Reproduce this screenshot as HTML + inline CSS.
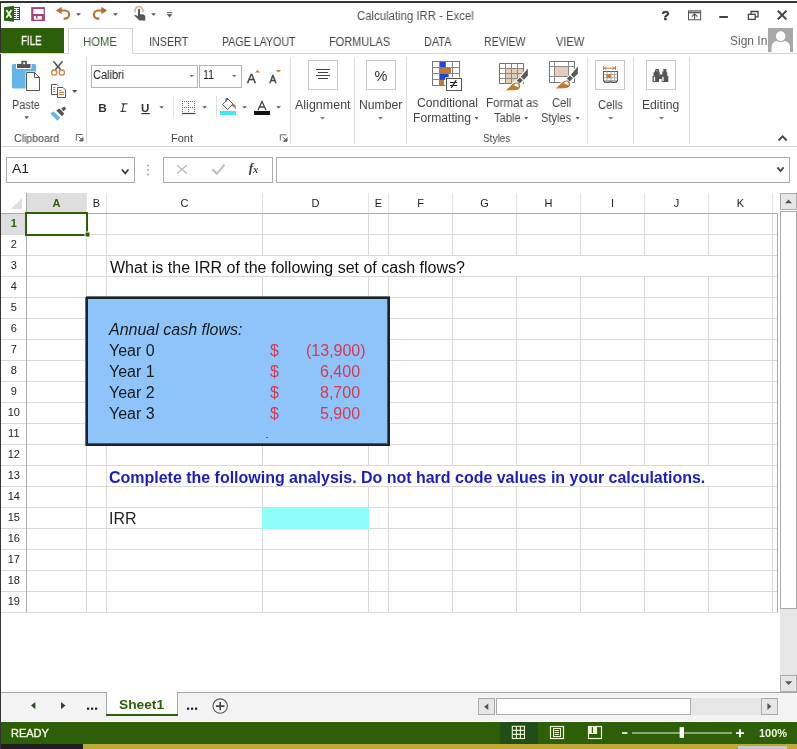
<!DOCTYPE html>
<html><head><meta charset="utf-8">
<style>
*{margin:0;padding:0;box-sizing:border-box}
html,body{width:797px;height:749px;overflow:hidden;background:#fff}
body{position:relative;font-family:"Liberation Sans",sans-serif;color:#444}
.a{position:absolute}
.t{position:absolute;white-space:nowrap;transform-origin:0 0;will-change:transform}
.cell{position:absolute;font-family:"Liberation Sans",sans-serif;font-size:16px;white-space:nowrap;color:#000;line-height:16px;will-change:transform}
svg{position:absolute;overflow:visible;will-change:transform}
</style></head><body>

<!-- window borders -->
<div class="a" style="left:0;top:1px;width:797px;height:2px;background:#333"></div>
<div class="a" style="left:0;top:1px;width:1px;height:748px;background:#333"></div>

<!-- ===== Title bar icons ===== -->
<svg style="left:0;top:0" width="797" height="28" viewBox="0 0 797 28">
  <!-- excel logo -->
  <rect x="13.5" y="7.5" width="6" height="12" fill="#fff" stroke="#2a6412" stroke-width="1"/>
  <path d="M14 9.5h2M17 9.5h2M14 11.5h2M17 11.5h2M14 13.5h2M17 13.5h2M14 15.5h2M17 15.5h2M14 17.5h2M17 17.5h2" stroke="#2a6412" stroke-width="1.1"/>
  <path d="M4 7.2 L14 5.7 L14 21.7 L4 20.8 Z" fill="#2a6412"/>
  <path d="M6.4 10 L11.4 17.8 M11.4 10 L6.4 17.8" stroke="#e6f4dc" stroke-width="1.9"/>
  <!-- save -->
  <rect x="31.2" y="7.1" width="13.7" height="13.9" fill="#a3417f"/>
  <rect x="33.3" y="9" width="10.3" height="5" fill="#fff"/>
  <rect x="33.9" y="16" width="7.9" height="3.6" fill="#fff"/>
  <rect x="36" y="16" width="1.5" height="2.4" fill="#a3417f"/>
  <!-- undo -->
  <path d="M57 10.5 H65 A4.1 4.1 0 0 1 65 18.7 H63.6" fill="none" stroke="#b8722f" stroke-width="2.2"/>
  <path d="M56 10.5 L61.7 6.8 L61.7 14.2 Z" fill="#b8722f"/>
  <path d="M76 13.2h5l-2.5 2.6z" fill="#555"/>
  <!-- redo -->
  <path d="M106 10.5 H98 A4.1 4.1 0 0 0 98 18.7 H99.4" fill="none" stroke="#b8722f" stroke-width="2.2"/>
  <path d="M107 10.5 L101.3 6.8 L101.3 14.2 Z" fill="#b8722f"/>
  <path d="M113 13.2h5l-2.5 2.6z" fill="#555"/>
  <!-- touch -->
  <path d="M135.2 12.2 A4.1 4.1 0 1 1 142.8 12.2" fill="none" stroke="#d2b89e" stroke-width="1.7"/>
  <path d="M138 9.5 Q139 8 140 9.5 V14.2 H143 Q145.3 14.6 145.3 17 V20.4 H139.5 L134.2 15.6 Q135 14.6 136.3 15.2 L138 16.2 Z" fill="#555"/>
  <path d="M151 13.2h5l-2.5 2.6z" fill="#555"/>
  <!-- customize -->
  <path d="M167 12.7h5.2" stroke="#555" stroke-width="1"/>
  <path d="M166.8 14.2h5.6l-2.8 3.4z" fill="#555"/>
  <!-- window controls -->
  <text x="661.6" y="20" font-family="Liberation Sans" font-weight="bold" font-size="13.5" fill="#3a3a3a" stroke="#3a3a3a" stroke-width="0.5">?</text>
  <rect x="688.5" y="10.8" width="12.2" height="9" fill="none" stroke="#555" stroke-width="1"/>
  <path d="M688.5 12.5h12.2" stroke="#555" stroke-width="1.6"/>
  <path d="M691.8 16.6l2.8-2.8 2.8 2.8M694.6 14v5.3" fill="none" stroke="#555" stroke-width="1.1"/>
  <path d="M719.2 17h8.7" stroke="#444" stroke-width="2"/>
  <rect x="748.4" y="14.3" width="6.8" height="5.1" fill="none" stroke="#444" stroke-width="1.3"/>
  <path d="M751 14.3v-2.8h7v5.4h-2.8" fill="none" stroke="#444" stroke-width="1.3"/>
  <path d="M777.8 10.8l8.6 8.6M786.4 10.8l-8.6 8.6" stroke="#444" stroke-width="2"/>
</svg>

<!-- ===== Tabs ===== -->
<div class="a" style="left:1px;top:28px;width:63px;height:25px;background:#2d5f08"></div>
<div class="a" style="left:0;top:53px;width:797px;height:1px;background:#d5d5d5"></div>
<div class="a" style="left:68px;top:28px;width:65px;height:26px;background:#fff;border:1px solid #d5d5d5;border-bottom:none"></div>
<svg style="left:768px;top:28px" width="25" height="24" viewBox="0 0 25 24">
  <rect width="25" height="24" fill="#a8a8a8"/>
  <ellipse cx="12.7" cy="8.3" rx="4.7" ry="5" fill="#fff"/>
  <path d="M3.5 24 V19 Q4 13.5 9 13 Q12.7 15.5 16.4 13 Q21.5 13.5 22 19 V24 Z" fill="#fff"/>
</svg>

<!-- ===== Ribbon ===== -->
<svg style="left:0;top:54px" width="797" height="93" viewBox="0 54 797 93">
  <!-- separators -->
  <path d="M86.5 57V144M290.5 57V144M354.5 57V144M406.5 57V144M587.5 57V144M633.5 57V144M689.5 57V144" stroke="#dcdcdc"/>
  <!-- paste clipboard -->
  <rect x="12" y="64" width="24" height="24.5" rx="1.5" fill="#62b4ea"/>
  <path d="M16.5 63.5 H31 V68.5 H16.5 Z" fill="#555" stroke="#fff" stroke-width="1"/>
  <rect x="21.3" y="60.8" width="5.6" height="4.6" rx="1" fill="#555"/>
  <rect x="23.2" y="62.3" width="1.9" height="1.9" fill="#fff"/>
  <path d="M25.5 71.5 H35.4 L40.5 76.6 V91.5 H25.5 Z" fill="#fff"/>
  <path d="M26.5 72.5 H34.5 L39.5 77.5 V90.5 H26.5 Z" fill="#fff" stroke="#555" stroke-width="1"/>
  <path d="M34.5 72.5 V77.5 H39.5" fill="none" stroke="#555" stroke-width="1"/>
  <!-- scissors -->
  <path d="M55.3 69.8 L62.6 61.3 M60.7 69.8 L53.4 61.3" stroke="#505050" stroke-width="1.5"/>
  <circle cx="54.2" cy="72.6" r="2.6" fill="#fff" stroke="#c88745" stroke-width="1.3"/>
  <circle cx="61.8" cy="72.6" r="2.6" fill="#fff" stroke="#c88745" stroke-width="1.3"/>
  <!-- copy -->
  <path d="M57.5 94.5 H51.5 V84.5 H56.5 L57.5 85.5" fill="#fff" stroke="#555" stroke-width="1"/>
  <path d="M53 87.5h2.5M53 89.5h2.5M53 91.5h2.5" stroke="#c88745" stroke-width="1"/>
  <path d="M57.5 87.5 H63 L65.5 90 V97.5 H57.5 Z" fill="#fff" stroke="#555" stroke-width="1"/>
  <path d="M59 90.5h2.5M59 92.5h5M59 94.5h5" stroke="#c88745" stroke-width="1"/>
  <path d="M72.2 90h5.1l-2.55 3z" fill="#555"/>
  <!-- format painter -->
  <path d="M50.1 113.3 L53.6 111.6 L60.3 117.8 L57.3 120.8 Z" fill="#62b4ea"/>
  <path d="M56.2 110.6 L59.4 108.4 L64.3 113.6 L62 116.2 Z" fill="#555"/>
  <path d="M61.2 108.6 L64.4 106.4 L66.2 108.8 L63.4 111.2 Z" fill="#555"/>
  <path d="M24.3 116.2h4.8l-2.4 2.7z" fill="#555"/>
  <!-- launchers -->
  <path d="M76.3 140.5V134.5H82.5" fill="none" stroke="#666" stroke-width="1"/>
  <path d="M78.5 136.5L82.8 140.8M83 137.5V141H79.5z" stroke="#666" fill="#666" stroke-width="1"/>
  <path d="M280.3 140.5V134.8H286.5" fill="none" stroke="#666" stroke-width="1"/>
  <path d="M282.5 136.8L286.8 141.1M287 137.8V141.3H283.5z" stroke="#666" fill="#666" stroke-width="1"/>
  <!-- font boxes -->
  <rect x="91.5" y="65.5" width="106" height="22" fill="#fff" stroke="#b4b4b4"/>
  <rect x="199.5" y="65.5" width="42" height="22" fill="#fff" stroke="#b4b4b4"/>
  <path d="M189.4 75h4.6l-2.3 2.3z" fill="#777"/>
  <path d="M231.9 75h4.6l-2.3 2.3z" fill="#777"/>
  <text x="247" y="82.7" font-family="Liberation Sans" font-size="13.3" fill="#444" stroke="#444" stroke-width="0.45">A</text>
  <path d="M255 72.6h5l-2.5-2.6z" fill="#c07a38"/>
  <text x="269.6" y="82.7" font-family="Liberation Sans" font-size="10.2" fill="#444" stroke="#444" stroke-width="0.45">A</text>
  <path d="M276 70h5l-2.5 2.6z" fill="#c07a38"/>
  <text x="98.2" y="111.8" font-family="Liberation Sans" font-weight="bold" font-size="11.8" fill="#333">B</text>
  <text x="120.8" y="111.8" font-family="Liberation Serif" font-style="italic" font-size="12" fill="#333">I</text>
  <path d="M121.6 103.8h6M120.3 111.3h6" stroke="#333" stroke-width="1"/>
  <text x="141" y="111.6" font-family="Liberation Sans" font-weight="bold" font-size="11.5" fill="#333">U</text>
  <path d="M141.3 113.6h8.5" stroke="#333" stroke-width="1.2"/>
  <path d="M159.3 106.3h4.6l-2.3 2.3z" fill="#555"/>
  <path d="M173.5 96V117M216.5 96V117" stroke="#e1e1e1"/>
  <!-- borders -->
  <path d="M182 101.5h14M182 107.5h14M182.5 101v12M188.5 101v12M194.5 101v12" stroke="#666" stroke-width="1" stroke-dasharray="1 1"/>
  <path d="M182 113.5h13.5" stroke="#444" stroke-width="1.2"/>
  <path d="M202.2 106.2h4.8l-2.4 2.4z" fill="#555"/>
  <!-- fill color -->
  <path d="M222.5 104.5 L228 99 L233 104 L227.5 109.5 Z" fill="#fff" stroke="#555" stroke-width="1"/>
  <path d="M226 101.5 V98.5 H228" fill="none" stroke="#555" stroke-width="1"/>
  <path d="M233 104 Q236.5 104.5 235.8 109 Q234.2 106.8 231.5 105.5 Z" fill="#b8722f"/>
  <rect x="220" y="111" width="16" height="4" fill="#42e6ef"/>
  <path d="M242.1 106.2h4.8l-2.4 2.4z" fill="#555"/>
  <!-- font color -->
  <path d="M257.9 110.3 L262 101.5 L266.1 110.3 M259.6 107 H264.4" fill="none" stroke="#444" stroke-width="1.3"/>
  <rect x="254" y="111" width="16" height="4" fill="#111"/>
  <path d="M276.2 106.2h4.8l-2.4 2.4z" fill="#555"/>
  <!-- alignment -->
  <rect x="308.5" y="60.5" width="29" height="29" fill="#fff" stroke="#c6c6c6"/>
  <path d="M316 69.5h14M318 72.5h10M316 75.5h14M318 78.5h10" stroke="#444" stroke-width="1"/>
  <path d="M320.1 117h4.8l-2.4 2.5z" fill="#777"/>
  <!-- number -->
  <rect x="366.5" y="60.5" width="29" height="29" fill="#fff" stroke="#c6c6c6"/>
  <text x="381" y="80.8" text-anchor="middle" font-family="Liberation Sans" font-size="14.5" fill="#333">%</text>
  <path d="M378.1 117h4.8l-2.4 2.5z" fill="#777"/>
  <!-- conditional formatting -->
  <rect x="432.5" y="61.5" width="27" height="24" fill="#fff" stroke="#777"/>
  <path d="M439.5 61.5V85.5M452.5 61.5V85.5M432.5 67.5H459.5M432.5 73.5H459.5M432.5 79.5H459.5" stroke="#888" stroke-width="1"/>
  <rect x="440" y="62" width="5.8" height="5.2" fill="#2147d6"/>
  <rect x="440" y="68" width="11" height="5" fill="#c07a38"/>
  <rect x="440" y="74" width="8.7" height="5" fill="#2147d6"/>
  <rect x="440" y="79" width="4.5" height="0.8" fill="#2147d6"/>
  <rect x="440" y="80" width="4" height="5.5" fill="#c07a38"/>
  <rect x="445.3" y="77.3" width="17.4" height="14.4" fill="#fff"/>
  <rect x="446.5" y="78.5" width="15" height="12" fill="#fff" stroke="#555"/>
  <path d="M450 82.5h7.2M450 85.5h7.2M456.2 80.2 L451.2 87.9" stroke="#222" stroke-width="1.2"/>
  <path d="M474.6 117h4l-2 2.4z" fill="#555"/>
  <!-- format as table -->
  <rect x="505.5" y="68.5" width="18" height="15" fill="#e4cdb8"/>
  <path d="M499.5 63.5H523.5V83.5H499.5Z" fill="none" stroke="#707070"/>
  <path d="M499.5 68.5H523.5M499.5 73.5H523.5M499.5 78.5H523.5M505.5 63.5V83.5M511.5 63.5V83.5M517.5 63.5V83.5" stroke="#8a8a8a" stroke-width="1" fill="none"/>
  <g>
    <path d="M503.5 92 L512.5 82.5 L516.2 80.6 L527 67.5 L529.3 67.5 L529.3 76 L523.8 81 L521.5 86.5 Q520.5 91.5 514 92 Z" fill="#fff"/>
    <path d="M505.8 90.4 L512.3 84.2 Q514.8 82 518 82.6 Q521.1 84.3 519.9 87.4 Q519 89.8 514.8 90.2 Z" fill="#c07a38"/>
    <path d="M513.6 85.2 Q515.2 83.2 517.5 83.7 Q519.3 85 518.4 87.2 Z" fill="#fff"/>
    <path d="M516.8 80.6 L520 77.4 L522.9 80.3 L519.7 83.5 Z" fill="#5a5a5a"/>
    <path d="M520.8 76.7 L527.9 68.6 L527.9 75.6 L523.9 79.8 Z" fill="#5a5a5a"/>
  </g>
  <path d="M524.2 117h4l-2 2.4z" fill="#555"/>
  <!-- cell styles -->
  <rect x="554.5" y="66.5" width="14" height="10" fill="#e4cdb8"/>
  <path d="M549.5 61.5H574.5V82.5H549.5Z" fill="none" stroke="#707070"/>
  <path d="M549.5 66.5H574.5M549.5 76.5H574.5M554.5 61.5V82.5M568.5 61.5V82.5" stroke="#8a8a8a" stroke-width="1" fill="none"/>
  <g transform="translate(50,-2)">
    <path d="M503.5 92 L512.5 82.5 L516.2 80.6 L527 67.5 L529.3 67.5 L529.3 76 L523.8 81 L521.5 86.5 Q520.5 91.5 514 92 Z" fill="#fff"/>
    <path d="M505.8 90.4 L512.3 84.2 Q514.8 82 518 82.6 Q521.1 84.3 519.9 87.4 Q519 89.8 514.8 90.2 Z" fill="#c07a38"/>
    <path d="M513.6 85.2 Q515.2 83.2 517.5 83.7 Q519.3 85 518.4 87.2 Z" fill="#fff"/>
    <path d="M516.8 80.6 L520 77.4 L522.9 80.3 L519.7 83.5 Z" fill="#5a5a5a"/>
    <path d="M520.8 76.7 L527.9 68.6 L527.9 75.6 L523.9 79.8 Z" fill="#5a5a5a"/>
  </g>
  <path d="M575.6 117h4l-2 2.4z" fill="#555"/>
  <!-- cells -->
  <rect x="595.5" y="60.5" width="29" height="29" fill="#fff" stroke="#c6c6c6"/>
  <path d="M603.5 66v4M615.5 66v4M604 68.2h11" stroke="#c07a38" stroke-width="1"/>
  <path d="M606.5 66.6l-2 1.6 2 1.6M612.5 66.6l2 1.6-2 1.6" fill="none" stroke="#c07a38" stroke-width="0.9"/>
  <rect x="603.5" y="71.5" width="14" height="9.5" fill="#fff" stroke="#555"/>
  <path d="M603.5 74.5h14M603.5 77.8h14M607 71.5v9.5M611 71.5v9.5M614.5 71.5v9.5" stroke="#aaa" stroke-width="1"/>
  <rect x="606.5" y="74.3" width="4.3" height="3.6" fill="#c07a38"/>
  <path d="M604.5 81 v1.5 h5.5 v-1.5 M611 81 v1.5 h5.5 v-1.5" fill="none" stroke="#555" stroke-width="1"/>
  <path d="M608.3 117h5l-2.5 2.5z" fill="#777"/>
  <!-- editing binoculars -->
  <rect x="646.5" y="60.5" width="29" height="29" fill="#fff" stroke="#c6c6c6"/>
  <path d="M655.6 69 h3.3 v2.6 h0.8 v3 h2.6 v-3 h0.8 v-2.6 h3.3 v3.3 h0.9 v3.6 h1 v6 h-6.6 v-2.8 h-2.6 v2.8 h-6.6 v-6 h1 v-3.6 h0.9 z" fill="#555"/>
  <rect x="653.8" y="76.8" width="1.3" height="4.2" fill="#fff"/>
  <rect x="662.3" y="76.8" width="1.3" height="4.2" fill="#fff"/>
  <rect x="656.4" y="70" width="1.2" height="1.3" fill="#aaa"/>
  <rect x="662.9" y="70" width="1.2" height="1.3" fill="#aaa"/>
  <path d="M659 117h5l-2.5 2.5z" fill="#777"/>
  <!-- collapse chevron -->
  <path d="M778.5 140.5 L782.6 136.3 L786.7 140.5" fill="none" stroke="#444" stroke-width="1.8"/>
</svg>
<div class="a" style="left:1px;top:146px;width:796px;height:1px;background:#d5d5d5"></div>

<!-- ===== Formula bar ===== -->
<svg style="left:0;top:150px" width="797" height="40" viewBox="0 150 797 40">
  <rect x="6.5" y="157.5" width="128" height="25" fill="#fff" stroke="#ababab"/>
  <path d="M122 169.5 L125.2 173.5 L128.4 169.5" fill="none" stroke="#333" stroke-width="1.7"/>
  <circle cx="148" cy="165.5" r="0.9" fill="#999"/><circle cx="148" cy="170" r="0.9" fill="#999"/><circle cx="148" cy="174.5" r="0.9" fill="#999"/>
  <rect x="163.5" y="157.5" width="109" height="25" fill="#fff" stroke="#ababab"/>
  <path d="M177 165.2l9.8 8.4M186.8 165.2l-9.8 8.4" stroke="#b8b8b8" stroke-width="1.3"/>
  <path d="M212.3 169.3 L216.8 173.8 L224.5 164.6" fill="none" stroke="#bdbdbd" stroke-width="2"/>
  <text x="248.8" y="171.8" font-family="Liberation Serif" font-style="italic" font-weight="bold" font-size="13.5" fill="#444">f</text>
  <text x="253" y="172.7" font-family="Liberation Serif" font-style="italic" font-weight="bold" font-size="10.5" fill="#444">x</text>
  <rect x="276.5" y="157.5" width="513" height="25" fill="#fff" stroke="#ababab"/>
  <path d="M777.4 167.3 L780.5 171 L783.6 167.3" fill="none" stroke="#444" stroke-width="1.8"/>
</svg>

<!-- ===== Grid ===== -->
<svg style="left:0;top:190px" width="797" height="430" viewBox="0 190 797 430">
<rect x="27" y="193" width="59" height="20" fill="#dedede"/>
<rect x="1" y="214" width="25" height="20" fill="#dedede"/>
<path d="M11 209 L22 209 L22 198 Z" fill="#dedede"/>
<path d="M27 234.5H777" stroke="#d9d9d9"/>
<path d="M1 234.5H26" stroke="#d9d9d9"/>
<path d="M27 255.5H777" stroke="#d9d9d9"/>
<path d="M1 255.5H26" stroke="#d9d9d9"/>
<path d="M27 276.5H777" stroke="#d9d9d9"/>
<path d="M1 276.5H26" stroke="#d9d9d9"/>
<path d="M27 297.5H777" stroke="#d9d9d9"/>
<path d="M1 297.5H26" stroke="#d9d9d9"/>
<path d="M27 318.5H777" stroke="#d9d9d9"/>
<path d="M1 318.5H26" stroke="#d9d9d9"/>
<path d="M27 339.5H777" stroke="#d9d9d9"/>
<path d="M1 339.5H26" stroke="#d9d9d9"/>
<path d="M27 360.5H777" stroke="#d9d9d9"/>
<path d="M1 360.5H26" stroke="#d9d9d9"/>
<path d="M27 381.5H777" stroke="#d9d9d9"/>
<path d="M1 381.5H26" stroke="#d9d9d9"/>
<path d="M27 402.5H777" stroke="#d9d9d9"/>
<path d="M1 402.5H26" stroke="#d9d9d9"/>
<path d="M27 423.5H777" stroke="#d9d9d9"/>
<path d="M1 423.5H26" stroke="#d9d9d9"/>
<path d="M27 444.5H777" stroke="#d9d9d9"/>
<path d="M1 444.5H26" stroke="#d9d9d9"/>
<path d="M27 465.5H777" stroke="#d9d9d9"/>
<path d="M1 465.5H26" stroke="#d9d9d9"/>
<path d="M27 486.5H777" stroke="#d9d9d9"/>
<path d="M1 486.5H26" stroke="#d9d9d9"/>
<path d="M27 507.5H777" stroke="#d9d9d9"/>
<path d="M1 507.5H26" stroke="#d9d9d9"/>
<path d="M27 528.5H777" stroke="#d9d9d9"/>
<path d="M1 528.5H26" stroke="#d9d9d9"/>
<path d="M27 549.5H777" stroke="#d9d9d9"/>
<path d="M1 549.5H26" stroke="#d9d9d9"/>
<path d="M27 570.5H777" stroke="#d9d9d9"/>
<path d="M1 570.5H26" stroke="#d9d9d9"/>
<path d="M27 591.5H777" stroke="#d9d9d9"/>
<path d="M1 591.5H26" stroke="#d9d9d9"/>
<path d="M27 612.5H777" stroke="#d9d9d9"/>
<path d="M1 612.5H26" stroke="#d9d9d9"/>
<path d="M86.5 214V612" stroke="#d9d9d9"/>
<path d="M106.5 214V612" stroke="#d9d9d9"/>
<path d="M262.5 214V255" stroke="#d9d9d9"/>
<path d="M262.5 277V465" stroke="#d9d9d9"/>
<path d="M262.5 487V612" stroke="#d9d9d9"/>
<path d="M368.5 214V255" stroke="#d9d9d9"/>
<path d="M368.5 277V465" stroke="#d9d9d9"/>
<path d="M368.5 487V612" stroke="#d9d9d9"/>
<path d="M388.5 214V255" stroke="#d9d9d9"/>
<path d="M388.5 277V465" stroke="#d9d9d9"/>
<path d="M388.5 487V612" stroke="#d9d9d9"/>
<path d="M452.5 214V255" stroke="#d9d9d9"/>
<path d="M452.5 277V465" stroke="#d9d9d9"/>
<path d="M452.5 487V612" stroke="#d9d9d9"/>
<path d="M516.5 214V255" stroke="#d9d9d9"/>
<path d="M516.5 277V465" stroke="#d9d9d9"/>
<path d="M516.5 487V612" stroke="#d9d9d9"/>
<path d="M580.5 214V255" stroke="#d9d9d9"/>
<path d="M580.5 277V465" stroke="#d9d9d9"/>
<path d="M580.5 487V612" stroke="#d9d9d9"/>
<path d="M644.5 214V255" stroke="#d9d9d9"/>
<path d="M644.5 277V465" stroke="#d9d9d9"/>
<path d="M644.5 487V612" stroke="#d9d9d9"/>
<path d="M708.5 214V255" stroke="#d9d9d9"/>
<path d="M708.5 277V465" stroke="#d9d9d9"/>
<path d="M708.5 487V612" stroke="#d9d9d9"/>
<path d="M772.5 214V612" stroke="#d9d9d9"/>
<path d="M86.5 193V213" stroke="#e3e3e3"/>
<path d="M106.5 193V213" stroke="#e3e3e3"/>
<path d="M262.5 193V213" stroke="#e3e3e3"/>
<path d="M368.5 193V213" stroke="#e3e3e3"/>
<path d="M388.5 193V213" stroke="#e3e3e3"/>
<path d="M452.5 193V213" stroke="#e3e3e3"/>
<path d="M516.5 193V213" stroke="#e3e3e3"/>
<path d="M580.5 193V213" stroke="#e3e3e3"/>
<path d="M644.5 193V213" stroke="#e3e3e3"/>
<path d="M708.5 193V213" stroke="#e3e3e3"/>
<path d="M772.5 193V213" stroke="#e3e3e3"/>
<path d="M1 213.5H777" stroke="#ababab"/>
<path d="M26.5 193V612" stroke="#ababab"/>
<path d="M777.5 213V613" stroke="#ababab"/>
<path d="M1 612.5H778" stroke="#d9d9d9"/>
<text x="56.5" y="207" text-anchor="middle" font-family="Liberation Sans" font-weight="bold" font-size="11" fill="#2d5f08">A</text>
<text x="96.5" y="207" text-anchor="middle" font-family="Liberation Sans" font-size="11" fill="#222">B</text>
<text x="184.5" y="207" text-anchor="middle" font-family="Liberation Sans" font-size="11" fill="#222">C</text>
<text x="315.5" y="207" text-anchor="middle" font-family="Liberation Sans" font-size="11" fill="#222">D</text>
<text x="378.5" y="207" text-anchor="middle" font-family="Liberation Sans" font-size="11" fill="#222">E</text>
<text x="420.5" y="207" text-anchor="middle" font-family="Liberation Sans" font-size="11" fill="#222">F</text>
<text x="484.5" y="207" text-anchor="middle" font-family="Liberation Sans" font-size="11" fill="#222">G</text>
<text x="548.5" y="207" text-anchor="middle" font-family="Liberation Sans" font-size="11" fill="#222">H</text>
<text x="612.5" y="207" text-anchor="middle" font-family="Liberation Sans" font-size="11" fill="#222">I</text>
<text x="676.5" y="207" text-anchor="middle" font-family="Liberation Sans" font-size="11" fill="#222">J</text>
<text x="740.5" y="207" text-anchor="middle" font-family="Liberation Sans" font-size="11" fill="#222">K</text>
<text x="13.8" y="227" text-anchor="middle" font-family="Liberation Sans" font-weight="bold" font-size="11" fill="#2d5f08">1</text>
<text x="13.8" y="248" text-anchor="middle" font-family="Liberation Sans" font-size="11" fill="#222">2</text>
<text x="13.8" y="269" text-anchor="middle" font-family="Liberation Sans" font-size="11" fill="#222">3</text>
<text x="13.8" y="290" text-anchor="middle" font-family="Liberation Sans" font-size="11" fill="#222">4</text>
<text x="13.8" y="311" text-anchor="middle" font-family="Liberation Sans" font-size="11" fill="#222">5</text>
<text x="13.8" y="332" text-anchor="middle" font-family="Liberation Sans" font-size="11" fill="#222">6</text>
<text x="13.8" y="353" text-anchor="middle" font-family="Liberation Sans" font-size="11" fill="#222">7</text>
<text x="13.8" y="374" text-anchor="middle" font-family="Liberation Sans" font-size="11" fill="#222">8</text>
<text x="13.8" y="395" text-anchor="middle" font-family="Liberation Sans" font-size="11" fill="#222">9</text>
<text x="13.8" y="416" text-anchor="middle" font-family="Liberation Sans" font-size="11" fill="#222">10</text>
<text x="13.8" y="437" text-anchor="middle" font-family="Liberation Sans" font-size="11" fill="#222">11</text>
<text x="13.8" y="458" text-anchor="middle" font-family="Liberation Sans" font-size="11" fill="#222">12</text>
<text x="13.8" y="479" text-anchor="middle" font-family="Liberation Sans" font-size="11" fill="#222">13</text>
<text x="13.8" y="500" text-anchor="middle" font-family="Liberation Sans" font-size="11" fill="#222">14</text>
<text x="13.8" y="521" text-anchor="middle" font-family="Liberation Sans" font-size="11" fill="#222">15</text>
<text x="13.8" y="542" text-anchor="middle" font-family="Liberation Sans" font-size="11" fill="#222">16</text>
<text x="13.8" y="563" text-anchor="middle" font-family="Liberation Sans" font-size="11" fill="#222">17</text>
<text x="13.8" y="584" text-anchor="middle" font-family="Liberation Sans" font-size="11" fill="#222">18</text>
<text x="13.8" y="605" text-anchor="middle" font-family="Liberation Sans" font-size="11" fill="#222">19</text>
<rect x="87" y="298" width="302" height="147" fill="#8fc4fb" stroke="#182230" stroke-width="2"/>
<path d="M86 296.5H390M85.5 297V446" stroke="#707070" stroke-width="1"/>
<path d="M387.5 299V444M88 443.5H388" stroke="#3d5a7a" stroke-width="1"/>
<rect x="262" y="507" width="107" height="22" fill="#8ffcfc"/>
<rect x="26" y="213" width="61" height="22" fill="none" stroke="#2d5f08" stroke-width="2"/>
<rect x="85" y="232" width="5" height="5" fill="#2d5f08" stroke="#fff" stroke-width="1"/>
</svg>

<!-- cells -->
<div class="cell" style="left:109.7px;top:260px;color:#111">What is the IRR of the following set of cash flows?</div>
<div class="cell" style="left:109px;top:322px;font-style:italic;color:#1a1a1a">Annual cash flows:</div>
<div class="cell" style="left:109px;top:343px;color:#1a1a1a">Year 0</div>
<div class="cell" style="left:109px;top:364px;color:#1a1a1a">Year 1</div>
<div class="cell" style="left:109px;top:385px;color:#1a1a1a">Year 2</div>
<div class="cell" style="left:109px;top:406px;color:#1a1a1a">Year 3</div>
<div class="cell" style="left:270px;top:343px;color:#d5394d">$</div>
<div class="cell" style="left:270px;top:364px;color:#d5394d">$</div>
<div class="cell" style="left:270px;top:385px;color:#d5394d">$</div>
<div class="cell" style="left:270px;top:406px;color:#d5394d">$</div>
<div class="cell" style="left:306px;top:343px;color:#d5394d">(13,900)</div>
<div class="cell" style="left:320px;top:364px;color:#d5394d">6,400</div>
<div class="cell" style="left:320px;top:385px;color:#d5394d">8,700</div>
<div class="cell" style="left:320px;top:406px;color:#d5394d">5,900</div>
<div class="a" style="left:266px;top:437px;width:2px;height:1px;background:#d5394d"></div>
<div class="cell" style="left:109px;top:470px;font-weight:bold;color:#1c1cc4;letter-spacing:-0.015px">Complete the following analysis. Do not hard code values in your calculations.</div>
<div class="cell" style="left:109px;top:511px;color:#222">IRR</div>

<!-- ===== Scrollbars ===== -->
<svg style="left:0;top:190px" width="797" height="535" viewBox="0 190 797 535">
  <!-- vertical -->
  <rect x="780.5" y="193.5" width="16" height="16" fill="#e6e6e6" stroke="#ababab"/>
  <path d="M785 203.2h7l-3.5-3.7z" fill="#555"/>
  <rect x="780.5" y="211.5" width="16" height="397" fill="#fff" stroke="#ababab"/>
  <rect x="780" y="609" width="17" height="66" fill="#e6e6e6"/>
  <rect x="780.5" y="675.5" width="16" height="16" fill="#e6e6e6" stroke="#ababab"/>
  <path d="M785 681.3h7.3l-3.65 3.7z" fill="#555"/>
  <!-- tab bar -->
  <rect x="1" y="692" width="796" height="29" fill="#f3f3f3"/>
  <path d="M1 692.5H797" stroke="#a8a8a8"/>
  <rect x="106" y="692" width="72" height="24" fill="#fff"/>
  <path d="M106.5 692V716M177.5 692V716" stroke="#a8a8a8"/>
  <rect x="106" y="714" width="72" height="2" fill="#2d5f08"/>
  <path d="M35.4 702 V709.2 L31 705.6 Z" fill="#2b4a2b"/>
  <path d="M61 702 V709.2 L65.5 705.6 Z" fill="#2b4a2b"/>
  <rect x="87" y="707.6" width="2.2" height="2.2" fill="#222"/><rect x="91" y="707.6" width="2.2" height="2.2" fill="#222"/><rect x="95" y="707.6" width="2.2" height="2.2" fill="#222"/>
  <rect x="187" y="707.6" width="2.2" height="2.2" fill="#222"/><rect x="191" y="707.6" width="2.2" height="2.2" fill="#222"/><rect x="195" y="707.6" width="2.2" height="2.2" fill="#222"/>
  <circle cx="220.2" cy="706.1" r="7.2" fill="none" stroke="#555" stroke-width="1.1"/>
  <path d="M216 706.1h8.4M220.2 701.9v8.4" stroke="#444" stroke-width="1.6"/>
  <!-- horizontal scrollbar -->
  <rect x="478.5" y="698.5" width="16" height="16" fill="#e6e6e6" stroke="#ababab"/>
  <path d="M488.3 703.6 V710.1 L484.1 706.85 Z" fill="#555"/>
  <rect x="496.5" y="698.5" width="194" height="16" fill="#fff" stroke="#ababab"/>
  <rect x="691" y="698" width="70" height="17" fill="#e6e6e6"/>
  <rect x="761.5" y="698.5" width="16" height="16" fill="#e6e6e6" stroke="#ababab"/>
  <path d="M767.4 702.9 V710 L771.4 706.45 Z" fill="#555"/>
</svg>

<!-- ===== Status bar ===== -->
<div class="a" style="left:1px;top:722px;width:796px;height:22px;background:#2d5f08"></div>
<svg style="left:0;top:720px" width="797" height="29" viewBox="0 720 797 29">
  <rect x="500" y="722" width="38" height="22" fill="#1f4f16"/>
  <rect x="512.3" y="726.3" width="12.2" height="12.2" fill="none" stroke="#e8f5d0" stroke-width="1.1"/>
  <path d="M516.4 726.3v12.2M520.4 726.3v12.2M512.3 730.4h12.2M512.3 734.4h12.2" stroke="#e8f5d0" stroke-width="1.1"/>
  <rect x="550.5" y="726.5" width="13" height="12" fill="none" stroke="#e8f5d0" stroke-width="1.2"/>
  <rect x="553.5" y="728.5" width="7" height="8" fill="none" stroke="#e8f5d0" stroke-width="1"/>
  <path d="M554.5 730.5h4.5M554.5 732.5h4.5M554.5 734.5h4.5" stroke="#e8f5d0" stroke-width="1"/>
  <rect x="588.5" y="726.5" width="13" height="12" fill="none" stroke="#e8f5d0" stroke-width="1.2"/>
  <rect x="588.5" y="726.5" width="3.3" height="7" fill="#eef2e6"/>
  <rect x="593" y="726.5" width="3.5" height="7" fill="#eef2e6"/>
  <path d="M588.5 733.5H596.5V726.5" fill="none" stroke="#e8f5d0" stroke-width="1.2"/>
  <path d="M622 733h5.5" stroke="#fff" stroke-width="1.6"/>
  <path d="M632 733H732" stroke="#e8f5d0" stroke-width="1"/>
  <rect x="679.6" y="727.2" width="4.4" height="10.7" fill="#fff"/>
  <path d="M736 733.2h8M740 729.2v8" stroke="#fff" stroke-width="1.8"/>
  <rect x="0" y="744" width="83" height="5" fill="#1f1f1f"/>
  <rect x="83" y="744" width="714" height="5" fill="#bdab37"/>
  <rect x="738" y="746" width="49" height="3" fill="#c9c9c9"/>
  <rect x="0" y="721" width="1" height="28" fill="#333"/>
</svg>

<div class="t" style="left:357.23px;top:9.84px;font:normal 400 12px/12px 'Liberation Sans',sans-serif;color:#505050;transform:scaleX(0.9465)">Calculating IRR - Excel</div>
<div class="t" style="left:21.31px;top:34.84px;font:normal 400 12px/12px 'Liberation Sans',sans-serif;color:#ffffff;transform:scaleX(0.8120);-webkit-text-stroke:0.3px #fff">FILE</div>
<div class="t" style="left:83.44px;top:35.84px;font:normal 400 12px/12px 'Liberation Sans',sans-serif;color:#3a5e3a;transform:scaleX(0.9411)">HOME</div>
<div class="t" style="left:149.06px;top:35.84px;font:normal 400 12px/12px 'Liberation Sans',sans-serif;color:#444;transform:scaleX(0.8969)">INSERT</div>
<div class="t" style="left:221.87px;top:35.84px;font:normal 400 12px/12px 'Liberation Sans',sans-serif;color:#444;transform:scaleX(0.8873)">PAGE LAYOUT</div>
<div class="t" style="left:329.15px;top:35.84px;font:normal 400 12px/12px 'Liberation Sans',sans-serif;color:#444;transform:scaleX(0.9159)">FORMULAS</div>
<div class="t" style="left:423.95px;top:35.84px;font:normal 400 12px/12px 'Liberation Sans',sans-serif;color:#444;transform:scaleX(0.9089)">DATA</div>
<div class="t" style="left:484.37px;top:35.84px;font:normal 400 12px/12px 'Liberation Sans',sans-serif;color:#444;transform:scaleX(0.8761)">REVIEW</div>
<div class="t" style="left:556.45px;top:35.84px;font:normal 400 12px/12px 'Liberation Sans',sans-serif;color:#444;transform:scaleX(0.9220)">VIEW</div>
<div class="t" style="left:730.00px;top:34.84px;font:normal 400 12px/12px 'Liberation Sans',sans-serif;color:#666;transform:scaleX(1.0006)">Sign In</div>
<div class="t" style="left:12.06px;top:99.04px;font:normal 400 12px/12px 'Liberation Sans',sans-serif;color:#444;transform:scaleX(0.9053)">Paste</div>
<div class="t" style="left:14.17px;top:132.89px;font:normal 400 11px/11px 'Liberation Sans',sans-serif;color:#444;transform:scaleX(0.9596)">Clipboard</div>
<div class="t" style="left:93.45px;top:68.54px;font:normal 400 12px/12px 'Liberation Sans',sans-serif;color:#222;transform:scaleX(0.9166)">Calibri</div>
<div class="t" style="left:202.67px;top:68.54px;font:normal 400 12px/12px 'Liberation Sans',sans-serif;color:#222;transform:scaleX(0.8806)">11</div>
<div class="t" style="left:171.06px;top:132.89px;font:normal 400 11px/11px 'Liberation Sans',sans-serif;color:#444;transform:scaleX(0.9852)">Font</div>
<div class="t" style="left:294.58px;top:98.84px;font:normal 400 12px/12px 'Liberation Sans',sans-serif;color:#444;transform:scaleX(1.0413)">Alignment</div>
<div class="t" style="left:358.89px;top:98.84px;font:normal 400 12px/12px 'Liberation Sans',sans-serif;color:#444;transform:scaleX(1.0139)">Number</div>
<div class="t" style="left:416.89px;top:96.64px;font:normal 400 12px/12px 'Liberation Sans',sans-serif;color:#444;transform:scaleX(1.0172)">Conditional</div>
<div class="t" style="left:413.39px;top:111.74px;font:normal 400 12px/12px 'Liberation Sans',sans-serif;color:#444;transform:scaleX(1.0108)">Formatting</div>
<div class="t" style="left:486.22px;top:97.14px;font:normal 400 12px/12px 'Liberation Sans',sans-serif;color:#444;transform:scaleX(0.9679)">Format as</div>
<div class="t" style="left:493.74px;top:112.04px;font:normal 400 12px/12px 'Liberation Sans',sans-serif;color:#444;transform:scaleX(0.9300)">Table</div>
<div class="t" style="left:552.44px;top:97.14px;font:normal 400 12px/12px 'Liberation Sans',sans-serif;color:#444;transform:scaleX(0.9278)">Cell</div>
<div class="t" style="left:541.45px;top:112.04px;font:normal 400 12px/12px 'Liberation Sans',sans-serif;color:#444;transform:scaleX(0.9233)">Styles</div>
<div class="t" style="left:483.30px;top:132.89px;font:normal 400 11px/11px 'Liberation Sans',sans-serif;color:#444;transform:scaleX(0.9106)">Styles</div>
<div class="t" style="left:597.64px;top:98.54px;font:normal 400 12px/12px 'Liberation Sans',sans-serif;color:#444;transform:scaleX(0.9291)">Cells</div>
<div class="t" style="left:642.39px;top:98.54px;font:normal 400 12px/12px 'Liberation Sans',sans-serif;color:#444;transform:scaleX(1.0130)">Editing</div>
<div class="t" style="left:12.31px;top:162.00px;font:normal 400 13px/13px 'Liberation Sans',sans-serif;color:#222;transform:scaleX(1.0669)">A1</div>
<div class="t" style="left:119.01px;top:698.00px;font:normal 700 13px/13px 'Liberation Sans',sans-serif;color:#2d5f08;transform:scaleX(1.0570)">Sheet1</div>
<div class="t" style="left:11.25px;top:727.69px;font:normal 400 11px/11px 'Liberation Sans',sans-serif;color:#f8f8e4;transform:scaleX(0.9996);-webkit-text-stroke:0.35px #f8f8e4">READY</div>
<div class="t" style="left:759.46px;top:727.69px;font:normal 700 11px/11px 'Liberation Sans',sans-serif;color:#f4f4dc;transform:scaleX(0.9840)">100%</div>

</body></html>
